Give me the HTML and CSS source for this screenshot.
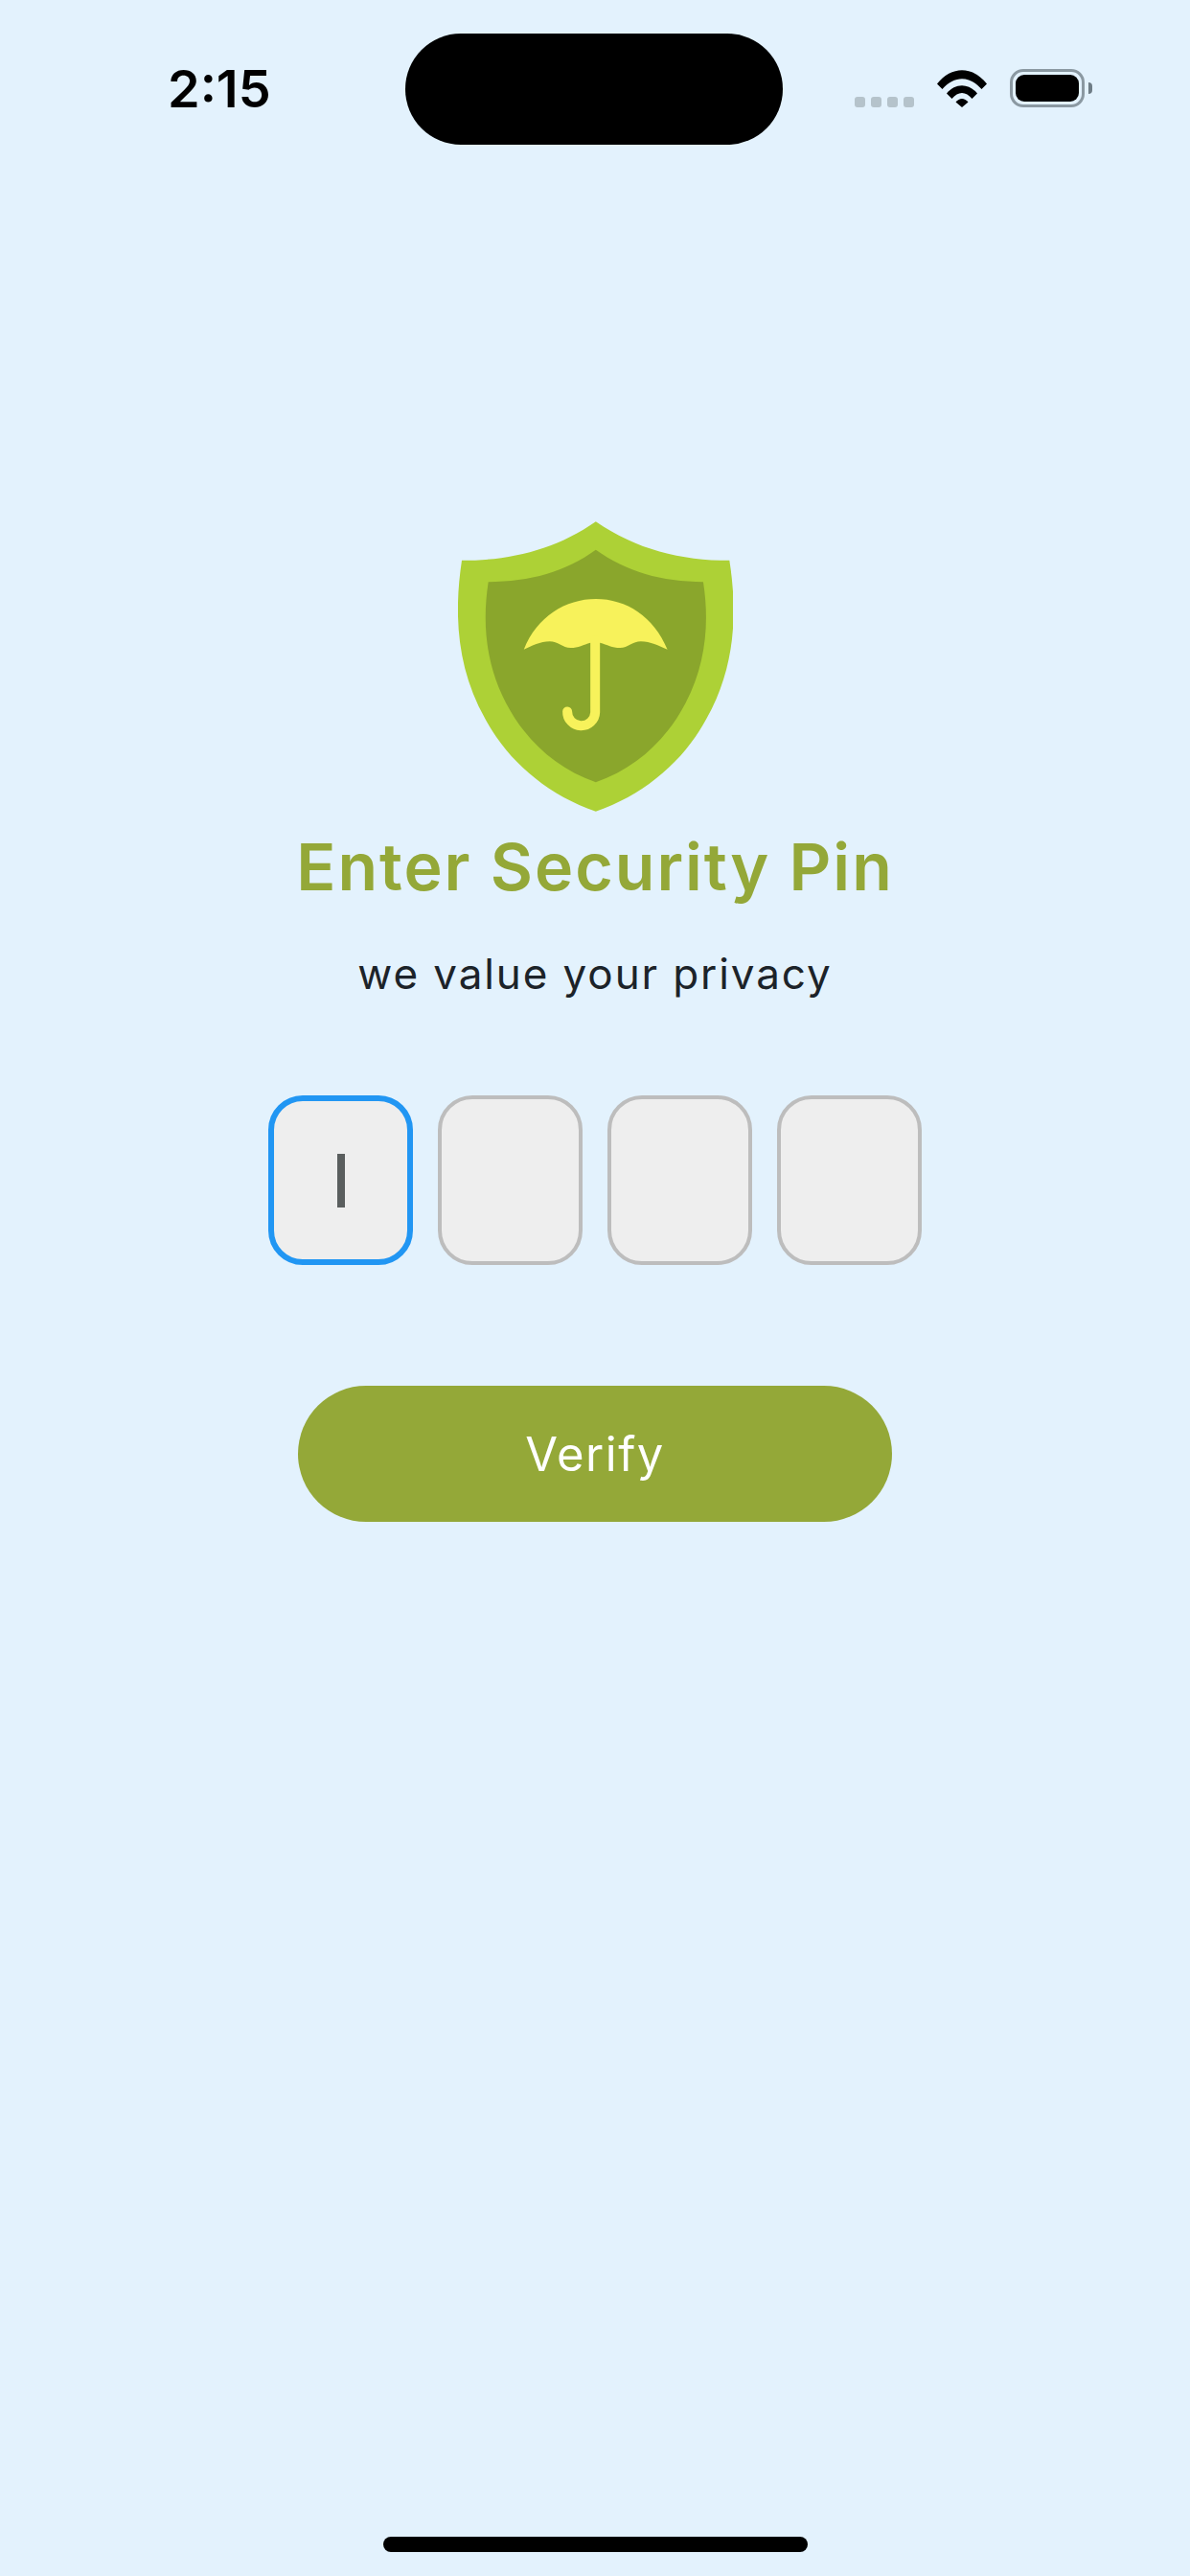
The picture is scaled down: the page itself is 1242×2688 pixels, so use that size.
FILE: index.html
```html
<!DOCTYPE html>
<html lang="en">
<head>
    <meta charset="UTF-8">
    <meta name="viewport" content="width=device-width, initial-scale=1.0">
    <title>Enter Security Pin</title>
    <link rel="stylesheet" href="styles.css">
</head>
<body>

<div class="screen">
    <header class="status-bar">
        <span class="time">2:15</span>
        <div class="island"></div>
        <div class="status-icons">
            <div class="signal">
                <span></span><span></span><span></span><span></span>
            </div>
            <svg class="wifi" viewBox="0 0 52 39" width="52" height="39">
                <path d="M0 14.5 C15 -4.5 37 -4.5 52 14.5 L46.5 20 C34 5.5 18 5.5 5.5 20 Z" />
                <path d="M10 24.5 C19 13.5 33 13.5 42 24.5 L36.5 30 C30 22 22 22 15.5 30 Z" />
                <path d="M19.5 33.5 C23.5 28.8 28.5 28.8 32.5 33.5 L26 39 Z" />
            </svg>
            <div class="battery">
                <div class="battery-level"></div>
            </div>
            <div class="battery-nub"></div>
        </div>
    </header>

    <main class="content">
        <svg class="shield" viewBox="83 43 860 907" width="287" height="303">
            <path fill="#add136" d="M514 43 C640 130 780 165 932 165 C958 330 950 500 860 660 C790 790 670 895 514 950 C358 895 238 790 168 660 C78 500 70 330 95 165 C248 165 390 130 514 43 Z" />
            <path fill="#8aa62c" d="M514 132 C610 200 720 232 850 232 C870 360 858 490 795 610 C735 725 640 815 514 858 C388 815 293 725 233 610 C170 490 158 360 178 232 C308 232 420 200 514 132 Z" />
            <path fill="#f7f25b" d="M289 443 C330 340 420 285 514 285 C610 285 695 340 738 443 C710 432 685 418 655 418 C630 418 615 438 590 438 C565 438 550 428 527 422 L497 422 C475 428 460 438 435 438 C410 438 395 418 370 418 C340 418 315 432 289 443 Z" />
            <path fill="none" stroke="#f7f25b" stroke-width="30" stroke-linecap="round" d="M512 415 L512 640 A43.5 43 0 0 1 425 637" />
        </svg>

        <h1 class="title">Enter Security Pin</h1>
        <p class="subtitle">we value your privacy</p>

        <div class="pin-row">
            <div class="pin-box active"><span class="caret"></span></div>
            <div class="pin-box"></div>
            <div class="pin-box"></div>
            <div class="pin-box"></div>
        </div>

        <button class="verify-btn">Verify</button>
    </main>

    <div class="home-indicator"></div>
</div>

</body>
</html>
```

FILE: styles.css
```css
* {
    box-sizing: border-box;
}
body {
    margin: 0;
    font-family: Inter, "Noto Sans", sans-serif;
    background-color: #e3f2fd;
}
.screen {
    display: flex;
    flex-direction: column;
    width: 1242px;
    height: 2688px;
    overflow: hidden;
}
.status-bar {
    display: flex;
    align-items: flex-start;
    padding-top: 35px;
}
.time {
    width: 423px;
    padding: 28px 0 0 175px;
    font-size: 54px;
    line-height: 60px;
    font-weight: 600;
    color: #000;
}
.island {
    width: 394px;
    height: 116px;
    border-radius: 58px;
    background-color: #000;
}
.status-icons {
    display: flex;
    align-items: flex-end;
    height: 77px;
    padding-left: 75px;
}
.signal {
    display: flex;
    gap: 6px;
    margin-right: 24px;
}
.signal span {
    width: 11px;
    height: 11px;
    border-radius: 3px;
    background-color: #b5c3cb;
}
.wifi {
    fill: #000;
    margin-right: 24px;
}
.battery {
    width: 78px;
    height: 40px;
    padding: 3px;
    border: 3px solid #8b99a2;
    border-radius: 14px;
}
.battery-level {
    height: 100%;
    border-radius: 9px;
    background-color: #000;
}
.battery-nub {
    width: 4px;
    height: 12px;
    margin: 0 0 14px 4px;
    border-radius: 0 6px 6px 0;
    background-color: #6f7d86;
}
.content {
    display: flex;
    flex-direction: column;
    align-items: center;
    padding-top: 393px;
}
.title {
    margin: 16px 0 0;
    font-size: 68px;
    line-height: 82px;
    font-weight: 600;
    letter-spacing: 2px;
    color: #94a838;
}
.subtitle {
    margin: 44px 0 0;
    font-size: 44px;
    line-height: 54px;
    letter-spacing: 1.9px;
    color: #1c2329;
}
.pin-row {
    display: flex;
    gap: 26px;
    margin-top: 100px;
}
.pin-box {
    display: flex;
    align-items: center;
    justify-content: center;
    width: 151px;
    height: 177px;
    border: 4px solid #bdbdbd;
    border-radius: 36px;
    background-color: #eeeeee;
}
.pin-box.active {
    border: 6px solid #2196f3;
}
.caret {
    width: 8px;
    height: 56px;
    background-color: #5a5e5e;
}
.verify-btn {
    width: 620px;
    height: 142px;
    margin-top: 126px;
    border: none;
    border-radius: 71px;
    background-color: #94a838;
    color: #fff;
    font-family: inherit;
    font-size: 49px;
    letter-spacing: 1.5px;
}
.home-indicator {
    width: 443px;
    height: 16px;
    margin: auto auto 25px;
    border-radius: 8px;
    background-color: #000;
}
```
